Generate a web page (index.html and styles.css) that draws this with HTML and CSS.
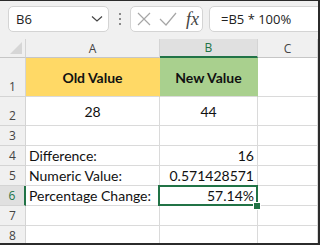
FILE: index.html
```html
<!DOCTYPE html>
<html>
<head>
<meta charset="utf-8">
<link rel="stylesheet" href="styles.css">
</head>
<body>
<div class="app">
  <div class="fbar">
    <div class="namebox">
      <span class="nb-text">B6</span>
      <svg class="chev" width="12" height="8" viewBox="0 0 12 8"><path d="M1 1.5 L6 6 L11 1.5" fill="none" stroke="#444" stroke-width="1.2"/></svg>
    </div>
    <div class="dots"><i></i><i></i><i></i></div>
    <div class="iconbox">
      <svg class="ico" width="14" height="14" viewBox="0 0 14 14"><path d="M1 1 L13 13 M13 1 L1 13" stroke="#a6a6a6" stroke-width="1.2" fill="none"/></svg>
      <svg class="ico" width="18" height="14" viewBox="0 0 18 14"><path d="M1 7 L7 13 L17 1" stroke="#a6a6a6" stroke-width="1.2" fill="none"/></svg>
      <span class="fx">fx</span>
    </div>
    <div class="formula">=B5 * 100%</div>
  </div>
  <div class="grid">
    <div class="corner"><span class="tri"></span></div>
    <div class="ch">A</div>
    <div class="ch ch-sel">B</div>
    <div class="ch">C</div>

    <div class="rh">1</div>
    <div class="c c-title c-old">Old Value</div>
    <div class="c c-title c-new">New Value</div>
    <div class="c"></div>

    <div class="rh">2</div>
    <div class="c c-mid c-center">28</div>
    <div class="c c-mid c-center">44</div>
    <div class="c"></div>

    <div class="rh">3</div>
    <div class="c"></div>
    <div class="c"></div>
    <div class="c"></div>

    <div class="rh">4</div>
    <div class="c">Difference:</div>
    <div class="c c-num">16</div>
    <div class="c"></div>

    <div class="rh">5</div>
    <div class="c">Numeric Value:</div>
    <div class="c c-num">0.571428571</div>
    <div class="c"></div>

    <div class="rh rh-sel">6</div>
    <div class="c">Percentage Change:</div>
    <div class="c c-num c-active">57.14%<span class="handle"></span></div>
    <div class="c"></div>

    <div class="rh">7</div>
    <div class="c"></div>
    <div class="c"></div>
    <div class="c"></div>

    <div class="rh">8</div>
    <div class="c"></div>
    <div class="c"></div>
    <div class="c"></div>
  </div>
</div>
</body>
</html>
```

FILE: styles.css
```css
* { box-sizing: border-box; }
html, body { margin: 0; padding: 0; }
body { width: 320px; height: 245px; overflow: hidden; background: #f0f0f0; }

.app {
  width: 320px;
  height: 245px;
  border-top: 1px solid #2b2b2b;
  border-right: 2px solid #2b2b2b;
  border-bottom: 2px solid #2b2b2b;
  background: #f0f0f0;
  display: flex;
  flex-direction: column;
  overflow: hidden;
}

.fbar {
  height: 38px;
  flex: none;
  display: flex;
  align-items: flex-start;
  padding: 5px 0 0 8px;
  overflow: hidden;
  font-family: "Open Sans", "Noto Sans", sans-serif;
}

.namebox {
  flex: none;
  width: 101px;
  height: 26px;
  background: #fff;
  border: 1px solid #d4d4d4;
  border-radius: 5px;
  display: flex;
  align-items: center;
  justify-content: space-between;
  padding: 0 5px 0 7px;
}
.nb-text { font-size: 13px; color: #222; }

.dots {
  flex: none;
  width: 21px;
  height: 26px;
  display: flex;
  flex-direction: column;
  align-items: center;
  justify-content: center;
  gap: 3px;
}
.dots i { display: block; width: 2px; height: 2px; background: #8a8a8a; }

.iconbox {
  flex: none;
  width: 73px;
  height: 26px;
  background: #fff;
  border: 1px solid #d4d4d4;
  border-radius: 5px;
  display: flex;
  align-items: center;
  padding: 0 0 0 6px;
  gap: 8px;
}
.fx {
  font-family: "Liberation Serif", "DejaVu Serif", serif;
  font-style: italic;
  font-size: 18px;
  color: #444;
  margin-left: 1px;
  line-height: 1;
}

.formula {
  flex: none;
  width: 160px;
  height: 26px;
  margin-left: 6px;
  background: #fff;
  border: 1px solid #d4d4d4;
  border-radius: 5px;
  font-size: 13px;
  color: #222;
  line-height: 24px;
  padding-left: 11px;
}

.grid {
  display: grid;
  grid-template-columns: 26px 134px 98px 1fr;
  grid-template-rows: 19px 39px 29px 20px 20px 20px 20px 20px 20px;
  background: #fff;
  font-family: "Lato", "Liberation Sans", sans-serif;
  font-size: 14px;
  color: #111;
}

.corner {
  position: relative;
  background: #f0f0f0;
  border-right: 1px solid #d4d4d4;
  border-bottom: 1px solid #c6c6c6;
}
.tri {
  position: absolute;
  right: 3px;
  bottom: 3px;
  width: 12px;
  height: 12px;
  background: #d6d6d6;
  clip-path: polygon(100% 0, 100% 100%, 0 100%);
}

.ch {
  background: #f0f0f0;
  border-right: 1px solid #d4d4d4;
  border-bottom: 1px solid #c6c6c6;
  font-family: "Open Sans", "Noto Sans", sans-serif;
  font-size: 12px;
  color: #444;
  display: flex;
  align-items: center;
  justify-content: center;
}
.ch-sel {
  background: #e0e0e0;
  color: #217346;
  border-bottom: 2px solid #217346;
}

.rh {
  background: #f0f0f0;
  border-right: 1px solid #d4d4d4;
  border-bottom: 1px solid #d4d4d4;
  font-family: "Open Sans", "Noto Sans", sans-serif;
  font-size: 12px;
  color: #444;
  display: flex;
  align-items: flex-end;
  justify-content: center;
  line-height: 18px;
}
.rh-sel {
  background: #e0e0e0;
  color: #217346;
  border-right: 2px solid #217346;
}

.c {
  border-right: 1px solid #dadada;
  border-bottom: 1px solid #dadada;
  padding: 0 3px;
  display: flex;
  align-items: flex-end;
  line-height: 19px;
  white-space: nowrap;
  position: relative;
}
.c-title {
  font-weight: bold;
  justify-content: center;
  align-items: center;
}
.c-old { background: #ffd966; border-color: #ffd966 #ffd966 #dadada #ffd966; }
.c-new { background: #a9d08e; border-color: #a9d08e #a9d08e #dadada #a9d08e; }
.c-mid { align-items: center; }
.c-center { justify-content: center; }
.c-num { justify-content: flex-end; }

.c-active::after {
  content: "";
  position: absolute;
  left: -2px;
  top: -1px;
  right: -1px;
  bottom: -1px;
  border: 2px solid #217346;
  pointer-events: none;
}
.handle {
  position: absolute;
  right: -3px;
  bottom: -4px;
  width: 6px;
  height: 6px;
  background: #217346;
  outline: 1px solid #fff;
  z-index: 2;
}
```
